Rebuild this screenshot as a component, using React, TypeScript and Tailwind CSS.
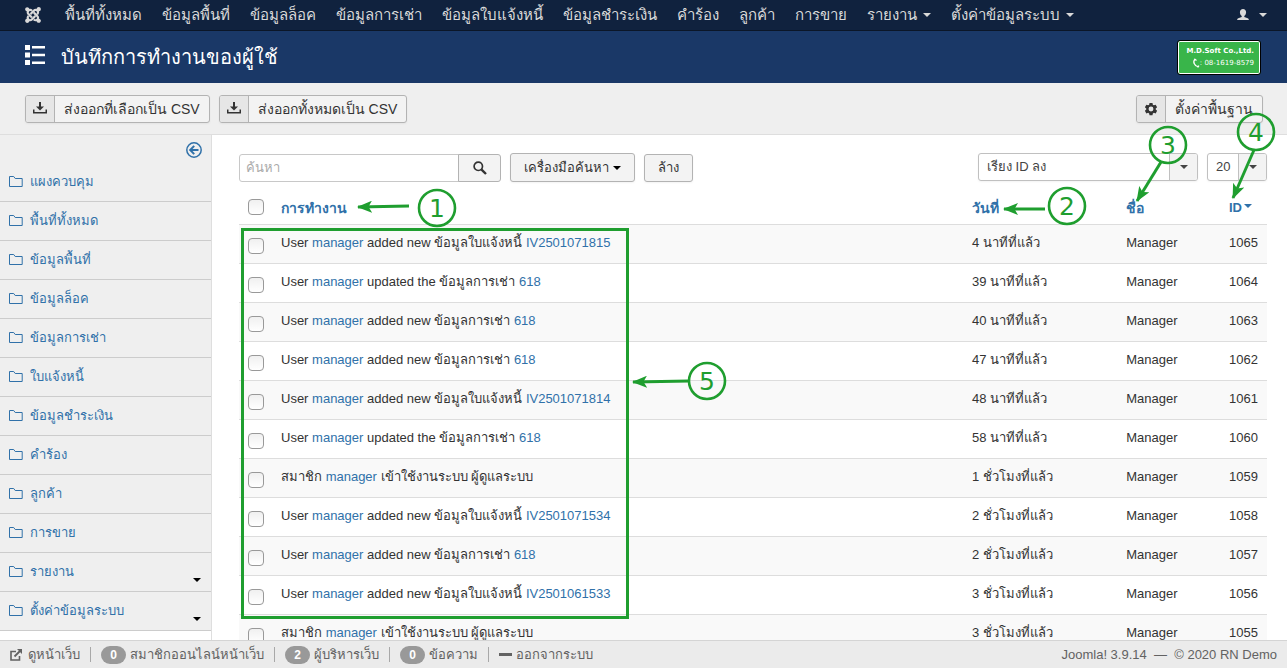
import React from 'react';
import { FaJoomla } from 'react-icons/fa';

type IconProps = { className?: string };

const navLinks = ['พื้นที่ทั้งหมด', 'ข้อมูลพื้นที่', 'ข้อมูลล็อค', 'ข้อมูลการเช่า', 'ข้อมูลใบแจ้งหนี้', 'ข้อมูลชำระเงิน', 'คำร้อง', 'ลูกค้า', 'การขาย'];
const navMenus = ['รายงาน', 'ตั้งค่าข้อมูลระบบ'];

const sideLinks: { label: string; menu?: boolean }[] = [
  { label: 'แผงควบคุม' },
  { label: 'พื้นที่ทั้งหมด' },
  { label: 'ข้อมูลพื้นที่' },
  { label: 'ข้อมูลล็อค' },
  { label: 'ข้อมูลการเช่า' },
  { label: 'ใบแจ้งหนี้' },
  { label: 'ข้อมูลชำระเงิน' },
  { label: 'คำร้อง' },
  { label: 'ลูกค้า' },
  { label: 'การขาย' },
  { label: 'รายงาน', menu: true },
  { label: 'ตั้งค่าข้อมูลระบบ', menu: true },
];

type Log = { id: number; date: string; before: string; after: string; target?: string };

const logs: Log[] = [
  { id: 1065, date: '4 นาทีที่แล้ว', before: 'User', after: 'added new ข้อมูลใบแจ้งหนี้', target: 'IV2501071815' },
  { id: 1064, date: '39 นาทีที่แล้ว', before: 'User', after: 'updated the ข้อมูลการเช่า', target: '618' },
  { id: 1063, date: '40 นาทีที่แล้ว', before: 'User', after: 'added new ข้อมูลการเช่า', target: '618' },
  { id: 1062, date: '47 นาทีที่แล้ว', before: 'User', after: 'added new ข้อมูลการเช่า', target: '618' },
  { id: 1061, date: '48 นาทีที่แล้ว', before: 'User', after: 'added new ข้อมูลใบแจ้งหนี้', target: 'IV2501071814' },
  { id: 1060, date: '58 นาทีที่แล้ว', before: 'User', after: 'updated the ข้อมูลการเช่า', target: '618' },
  { id: 1059, date: '1 ชั่วโมงที่แล้ว', before: 'สมาชิก', after: 'เข้าใช้งานระบบ ผู้ดูแลระบบ' },
  { id: 1058, date: '2 ชั่วโมงที่แล้ว', before: 'User', after: 'added new ข้อมูลใบแจ้งหนี้', target: 'IV2501071534' },
  { id: 1057, date: '2 ชั่วโมงที่แล้ว', before: 'User', after: 'added new ข้อมูลการเช่า', target: '618' },
  { id: 1056, date: '3 ชั่วโมงที่แล้ว', before: 'User', after: 'added new ข้อมูลใบแจ้งหนี้', target: 'IV2501061533' },
  { id: 1055, date: '3 ชั่วโมงที่แล้ว', before: 'สมาชิก', after: 'เข้าใช้งานระบบ ผู้ดูแลระบบ' },
];

const Caret = ({ className = '' }: IconProps) => (
  <svg viewBox="0 0 8 4" className={`h-1 w-2 shrink-0 ${className}`} fill="currentColor" aria-hidden="true">
    <path d="M0 0h8L4 4z" />
  </svg>
);

const FolderIcon = () => (
  <svg viewBox="0 0 14 12" className="h-3 w-3.5 shrink-0" fill="none" stroke="currentColor" aria-hidden="true">
    <path d="M.5 10.500V.5h4.200l1.500 2h7v8z" />
  </svg>
);

const DownloadIcon = () => (
  <svg viewBox="0 0 14 13" className="h-[13px] w-3.5" fill="currentColor" aria-hidden="true">
    <path d="M6 0h2v4.500h3L7 8.500 3 4.500h3z" />
    <path d="M0 7.500h1.500v2.500h11V7.500H14V11.500H0z" />
  </svg>
);

const GearIcon = () => (
  <svg viewBox="0 0 16 16" className="size-3.5" fill="currentColor" fillRule="evenodd" aria-hidden="true">
    <path d="M6.300 1h3.400l.4 2 1.200.7 2-.7 1.700 2.900L13.400 7.300v1.400l1.600 1.400-1.700 2.900-2-.7-1.200.7-.4 2H6.300l-.4-2-1.200-.7-2 .7L1 10.100l1.600-1.400V7.300L1 5.900 2.700 3l2 .7L5.900 3zM8 5.200a2.800 2.800 0 1 0 0 5.600 2.800 2.800 0 0 0 0-5.600z" />
  </svg>
);

const SearchIcon = () => (
  <svg viewBox="0 0 14 14" className="size-3.5" fill="none" stroke="currentColor" aria-hidden="true">
    <circle cx="5.300" cy="5.300" r="4.200" strokeWidth="1.700" />
    <path d="M8.300 8.300l4.700 4.700" strokeWidth="2.400" />
  </svg>
);

const UserIcon = () => (
  <svg viewBox="0 0 12 12" className="size-3" fill="currentColor" aria-hidden="true">
    <path d="M6 0c1.900 0 3.100 1.300 3.100 3.300 0 1.500-.7 3-1.800 3.700v1l3.400 1.300c.8.3 1.100.9 1.200 1.700H.1c.1-.8.400-1.400 1.200-1.700L4.700 8V7C3.600 6.300 2.900 4.800 2.900 3.300 2.900 1.300 4.100 0 6 0z" />
  </svg>
);

const ListIcon = () => (
  <svg viewBox="0 0 20 20" className="-mt-1 size-5" fill="currentColor" aria-hidden="true">
    <path d="M0 0h5v5H0zM0 7.500h5v5H0zM0 15h5v5H0zM7 1h13v2.500H7zM7 8.800h13v2.500H7zM7 16.500h13V19H7z" />
  </svg>
);

const BackIcon = () => (
  <svg viewBox="0 0 16 16" className="size-4" fill="none" stroke="currentColor" aria-hidden="true">
    <circle cx="8" cy="8" r="7.200" strokeWidth="1.500" />
    <path d="M12.500 8H4.500M8.200 3.900L4.200 8l4 4.100" strokeWidth="2" />
  </svg>
);

const ExternalIcon = () => (
  <svg viewBox="0 0 12 12" className="size-3" fill="none" stroke="currentColor" aria-hidden="true">
    <path d="M6 2.500H1v8.500h8.500V7" strokeWidth="1.600" />
    <path d="M4.500 7.500L10 2" strokeWidth="1.800" />
    <path d="M7 0h5v5z" fill="currentColor" stroke="none" />
  </svg>
);

const PhoneIcon = () => (
  <svg viewBox="0 0 8 10" className="h-2.5 w-2" fill="none" stroke="currentColor" aria-hidden="true">
    <path d="M3.200 1C.5 3.500 2 8 6.500 8.800" strokeWidth="1.300" />
    <path d="M2.500 1l2 1.500M5.500 9.300l1.500-1.700" strokeWidth="1.300" />
  </svg>
);

const button = 'rounded-[3px] border border-[#b3b3b3] bg-[#f3f3f3] text-[#333] shadow-[0_1px_2px_rgba(0,0,0,0.05)]';

function ToolButton({ icon, label }: { icon: React.ReactNode; label: string }) {
  return (
    <button className={`flex h-7 items-stretch overflow-hidden text-sm whitespace-nowrap ${button}`}>
      <span className="flex w-[29px] items-center justify-center border-r border-[#b3b3b3] bg-[#e6e6e6]">{icon}</span>
      <span className="flex items-center px-[9px]">{label}</span>
    </button>
  );
}

function Check({ label }: { label: string }) {
  return (
    <input
      type="checkbox"
      aria-label={label}
      className="block size-4 appearance-none rounded-[4px] border border-[#999] bg-linear-to-b from-[#f0f0f0] to-white checked:bg-[#3071a9]"
    />
  );
}

function SelectBox({ label, value, className }: { label: string; value: string; className: string }) {
  return (
    <div className={`relative h-7 self-start ${className}`}>
      <select
        aria-label={label}
        defaultValue={value}
        className="size-full appearance-none rounded-[3px] border border-[#c0c0c0] bg-white pl-2 text-[13px] text-[#444] shadow-[0_1px_2px_rgba(0,0,0,0.05)]"
      >
        <option>{value}</option>
      </select>
      <span className="pointer-events-none absolute inset-y-px right-px flex w-7 items-center justify-center rounded-r-[2px] border-l border-[#c0c0c0] bg-[#f3f3f3] text-[#444]">
        <Caret />
      </span>
    </div>
  );
}

function StatusItem({ count, label }: { count: number; label: string }) {
  return (
    <a href="#" className="flex items-center gap-1">
      <span className="flex h-[18px] w-[25px] items-center justify-center rounded-full bg-[#999] text-xs font-bold text-white">{count}</span>
      {label}
    </a>
  );
}

const Divider = () => <span className="h-[15px] w-px bg-[#a8a8a8]" />;

function Callouts() {
  const marks = [
    { n: 1, x: 437, y: 208 },
    { n: 2, x: 1067, y: 206 },
    { n: 3, x: 1168, y: 145 },
    { n: 4, x: 1256, y: 132 },
    { n: 5, x: 707, y: 381 },
  ];
  const arrows = [
    [409, 206, 358, 207],
    [1045, 209, 1004, 209],
    [1161, 162, 1137, 201],
    [1254, 150, 1233, 198],
    [689, 381, 633, 382],
  ];
  return (
    <svg className="pointer-events-none absolute top-0 left-0 h-[668px] w-[1287px]" viewBox="0 0 1287 668" fill="none" stroke="#1f9e2f" aria-hidden="true">
      <defs>
        <marker id="head" viewBox="0 0 15 12" refX="14" refY="6" markerWidth="15" markerHeight="12" markerUnits="userSpaceOnUse" orient="auto">
          <path d="M0 0L15 6 0 12 3.500 6z" fill="#1f9e2f" stroke="none" />
        </marker>
      </defs>
      <rect x="242.500" y="229.500" width="385" height="388" strokeWidth="3" />
      {arrows.map(([x1, y1, x2, y2]) => (
        <line key={x1} x1={x1} y1={y1} x2={x2} y2={y2} strokeWidth="3" markerEnd="url(#head)" />
      ))}
      {marks.map((m) => (
        <g key={m.n}>
          <circle cx={m.x} cy={m.y} r="18" strokeWidth="2.600" />
          <text x={m.x} y={m.y + 9} textAnchor="middle" fontSize="25" fontFamily="DejaVu Sans, sans-serif" fill="#1f9e2f" stroke="none">
            {m.n}
          </text>
        </g>
      ))}
    </svg>
  );
}

export default function App() {
  return (
    <div className="relative flex h-screen flex-col overflow-hidden bg-white font-['Liberation_Sans',sans-serif] text-[13px] leading-[18px] text-[#333]">
      <nav className="flex h-[31px] shrink-0 items-center border-b border-[#0b1628] bg-[#10223e] px-5 text-[15px] whitespace-nowrap text-[#d9d9d9]">
        <a href="#" aria-label="Joomla" className="mr-[19px] p-1">
          <FaJoomla className="size-[18px]" />
        </a>
        <div className="flex grow items-center gap-5">
          {navLinks.map((l) => (
            <a key={l} href="#">{l}</a>
          ))}
          {navMenus.map((l) => (
            <a key={l} href="#" className="flex items-center gap-1.5">
              {l}
              <Caret />
            </a>
          ))}
        </div>
        <a href="#" aria-label="ผู้ใช้" className="flex items-center gap-2.5">
          <UserIcon />
          <Caret />
        </a>
      </nav>

      <header className="flex h-[52px] shrink-0 items-center bg-[#1a3867] pr-[26px] pl-[25px] text-white">
        <ListIcon />
        <h1 className="ml-4 grow text-xl leading-9">บันทึกการทำงานของผู้ใช้</h1>
        <div className="flex h-[35px] w-[84px] flex-col items-end justify-center rounded-[3px] border border-black bg-[#39b54a] pr-1.5 font-['DejaVu_Sans',sans-serif] text-[7px] leading-3 whitespace-nowrap inset-ring inset-ring-white">
          <span className="font-bold">M.D.Soft Co.,Ltd.</span>
          <span className="flex items-center"><PhoneIcon />: 08-1619-8579</span>
        </div>
      </header>

      <div className="flex h-[52px] shrink-0 items-center gap-[9px] border-b border-[#dedede] bg-[#efefef] pr-6 pl-[25px]">
        <ToolButton icon={<DownloadIcon />} label="ส่งออกที่เลือกเป็น CSV" />
        <ToolButton icon={<DownloadIcon />} label="ส่งออกทั้งหมดเป็น CSV" />
        <div className="grow" />
        <ToolButton icon={<GearIcon />} label="ตั้งค่าพื้นฐาน" />
      </div>

      <div className="flex min-h-0 grow overflow-hidden">
        <aside className="w-[212px] shrink-0 border-r border-[#dedede] text-[#3071a9]">
          <div className="flex justify-end bg-[#efefef] pt-[7px] pr-[9px] pb-[5px]">
            <button aria-label="ซ่อนเมนู"><BackIcon /></button>
          </div>
          <ul className="bg-[#efefef]">
            {sideLinks.map((s) => (
              <li key={s.label} className="h-[39px] border-b border-[#ccc]">
                <a href="#" className="flex h-full items-center gap-[7px] pr-2.5 pl-[9px]">
                  <FolderIcon />
                  <span className="grow">{s.label}</span>
                  {s.menu && <Caret className="mt-4 text-black" />}
                </a>
              </li>
            ))}
          </ul>
        </aside>

        <main className="min-w-0 grow overflow-hidden pt-[18px] pr-5 pl-[27px]">
          <div className="flex h-[29px] items-end gap-[9px]">
            <form className="flex h-7" onSubmit={(e) => e.preventDefault()}>
              <input
                type="text"
                aria-label="ค้นหา"
                placeholder="ค้นหา"
                className="w-[220px] rounded-l-[3px] border border-[#c8c8c8] bg-white px-1.5 placeholder:text-[#aaa]"
              />
              <button aria-label="ค้นหา" className="-ml-px flex w-[43px] items-center justify-center rounded-r-[3px] border border-[#b3b3b3] bg-[#f3f3f3]">
                <SearchIcon />
              </button>
            </form>
            <button className={`flex h-[29px] items-center gap-1 px-[13px] whitespace-nowrap ${button}`}>
              เครื่องมือค้นหา
              <Caret className="text-black" />
            </button>
            <button className={`h-7 px-[13px] whitespace-nowrap ${button}`}>ล้าง</button>
            <div className="grow" />
            <SelectBox label="เรียงตาม" value="เรียง ID ลง" className="w-[220px]" />
            <SelectBox label="จำนวนแถว" value="20" className="w-[60px]" />
          </div>

          <table className="mt-2 w-full table-fixed border-collapse text-left">
            <colgroup>
              <col className="w-[34px]" />
              <col />
              <col className="w-[15%]" />
              <col className="w-[10%]" />
              <col className="w-[46px]" />
            </colgroup>
            <thead className="text-sm leading-[18px] text-[#3071a9]">
              <tr className="h-[34px] align-bottom">
                <th className="px-[9px] pb-[9px]"><Check label="เลือกทั้งหมด" /></th>
                <th className="px-2 pb-[7px]"><a href="#">การทำงาน</a></th>
                <th className="px-2 pb-[7px]"><a href="#">วันที่</a></th>
                <th className="px-2 pb-[7px]"><a href="#">ชื่อ</a></th>
                <th className="px-2 pb-[7px] text-[13px]"><a href="#" className="flex items-center gap-0.5">ID<Caret className="-mt-1" /></a></th>
              </tr>
            </thead>
            <tbody>
              {logs.map((r) => (
                <tr key={r.id} className="h-[39px] border-t border-[#ddd] align-top odd:bg-[#f9f9f9]">
                  <td className="px-[9px] pt-[13px]"><Check label={`เลือก ${r.id}`} /></td>
                  <td className="px-2 pt-[9px] whitespace-nowrap">
                    {r.before} <a href="#" className="text-[#3071a9]">manager</a> {r.after}{' '}
                    {r.target && <a href="#" className="text-[#3071a9]">{r.target}</a>}
                  </td>
                  <td className="px-2 pt-[9px]">{r.date}</td>
                  <td className="px-2 pt-[9px]">Manager</td>
                  <td className="px-2 pt-[9px]">{r.id}</td>
                </tr>
              ))}
            </tbody>
          </table>
        </main>
      </div>

      <footer className="flex h-7 shrink-0 items-center gap-2.5 border-t border-[#d4d4d4] bg-[#ebebeb] px-2.5 whitespace-nowrap text-[#626262]">
        <a href="#" className="flex items-center gap-1.5"><ExternalIcon />ดูหน้าเว็บ</a>
        <Divider />
        <StatusItem count={0} label="สมาชิกออนไลน์หน้าเว็บ" />
        <Divider />
        <StatusItem count={2} label="ผู้บริหารเว็บ" />
        <Divider />
        <StatusItem count={0} label="ข้อความ" />
        <Divider />
        <a href="#" className="flex items-center gap-1"><span className="h-[3px] w-[13px] bg-current" />ออกจากระบบ</a>
        <p className="grow text-right">Joomla! 3.9.14 &nbsp;—&nbsp; © 2020 RN Demo</p>
      </footer>

      <Callouts />
    </div>
  );
}
